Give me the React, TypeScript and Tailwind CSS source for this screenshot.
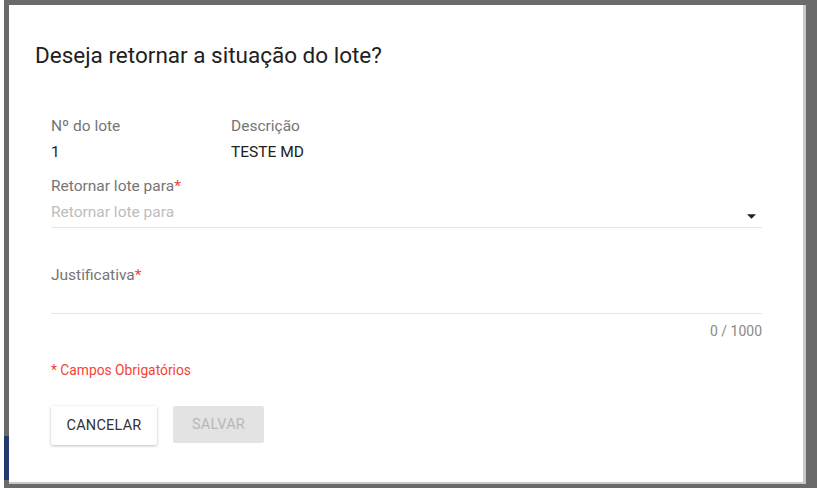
import React from 'react';

const App: React.FC = () => {
  return (
    <div className="w-[819px] h-[491px] bg-white overflow-hidden font-['Roboto',sans-serif]">
      <div className="ml-[4px] w-[813px] h-[488px] bg-[#6a6a6a] pl-[5px] pt-[5px] pr-[11px] pb-[4px] relative">
        <div className="absolute left-0 bottom-[8px] w-[5px] h-[44px] bg-[#243a6b]" />
        <div className="h-full w-full bg-white border-r-[3px] border-b-[2px] border-[#c8c8c8] flex flex-col">
          <h2 className="pl-[26px] pt-[35px] text-[22.5px] leading-[30px] text-[#212121]">
            Deseja retornar a situação do lote?
          </h2>

          <div className="pl-[42px] pr-[41px] pt-[45px] flex flex-col">
            <div className="flex text-[15.5px] leading-[22px]">
              <div className="w-[180px] flex flex-col gap-[4px]">
                <span className="text-[#757575]">Nº do lote</span>
                <span className="text-[#212121]">1</span>
              </div>
              <div className="flex flex-col gap-[4px]">
                <span className="text-[#757575]">Descrição</span>
                <span className="text-[#212121]">TESTE MD</span>
              </div>
            </div>

            <div className="mt-[12px] text-[15.5px] leading-[22px]">
              <div className="text-[#757575]">
                Retornar lote para<span className="text-[#f44336]">*</span>
              </div>
              <div className="mt-[4px] flex items-center justify-between border-b border-[#e6e6e6] pb-[4px]">
                <span className="text-[#bdbdbd]">Retornar lote para</span>
                <svg width="9" height="5" viewBox="0 0 10 5" className="mr-[6px] mt-[9px]">
                  <path d="M0 0h10L5 5z" fill="#212121" />
                </svg>
              </div>
            </div>

            <div className="mt-[36px] text-[15.5px] leading-[22px]">
              <div className="text-[#757575]">
                Justificativa<span className="text-[#f44336]">*</span>
              </div>
              <div className="h-[28px] border-b border-[#e6e6e6]" />
              <div className="mt-[8px] text-right text-[14px] leading-[18px] text-[#8a8a8a]">0 / 1000</div>
            </div>

            <div className="mt-[21px] text-[13.8px] leading-[18px] text-[#f44336]">* Campos Obrigatórios</div>

            <div className="mt-[27px] flex gap-[16px]">
              <button className="w-[106px] h-[39px] bg-white rounded-[2px] shadow-[0_1px_3px_rgba(0,0,0,0.25)] text-[14.5px] text-[#333] tracking-[0.2px]">
                CANCELAR
              </button>
              <button className="w-[91px] h-[37px] bg-[#e3e3e3] rounded-[2px] text-[14.5px] text-[#b8b8b8] tracking-[0.2px]">
                SALVAR
              </button>
            </div>
          </div>
        </div>
      </div>
    </div>
  );
};

export default App;
